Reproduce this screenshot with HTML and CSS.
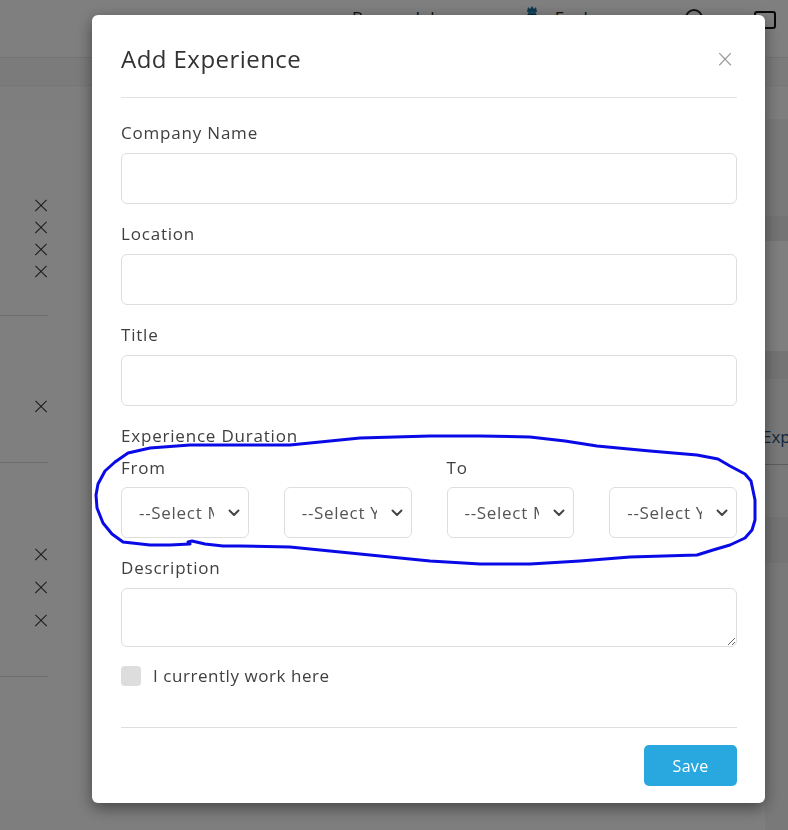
FILE: index.html
```html
<!DOCTYPE html>
<html lang="en">
<head>
<meta charset="utf-8">
<title>Add Experience</title>
<link rel="stylesheet" href="styles.css">
</head>
<body>
<div class="page">
  <header class="topnav">
    <span class="nav-link browse">Browse Jobs</span>
    <span class="nav-avatar">
      <svg width="14" height="18" viewBox="0 0 14 18"><path d="M2 6 L3 1 L5 3 L7 0 L9 3 L11 1 L12 6 Z" fill="#1f6f9c"/><circle cx="7" cy="9" r="4.5" fill="#2b86b8"/><rect x="3" y="8" width="8" height="2" fill="#1b4f6e"/><path d="M1 18 Q7 12 13 18 Z" fill="#2b86b8"/></svg>
    </span>
    <span class="nav-link explore">Explore</span>
    <span class="nav-search">
      <svg width="22" height="22" viewBox="0 0 22 22"><circle cx="10" cy="10" r="8" fill="none" stroke="#222" stroke-width="2"/><path d="M16 16 L21 21" stroke="#222" stroke-width="2"/></svg>
    </span>
    <span class="nav-msg">
      <svg width="22" height="20" viewBox="0 0 22 20"><rect x="1" y="1" width="20" height="16" rx="2" fill="none" stroke="#111" stroke-width="2"/></svg>
    </span>
  </header>
  <div class="subbar"></div>
  <main class="main">
    <aside class="left-card">
      <section class="lc-sec lc-sec1">
        <span class="x-icon"></span>
        <span class="x-icon"></span>
        <span class="x-icon"></span>
        <span class="x-icon"></span>
      </section>
      <section class="lc-sec lc-sec2">
        <span class="x-icon"></span>
      </section>
      <section class="lc-sec lc-sec3">
        <span class="x-icon"></span>
        <span class="x-icon"></span>
        <span class="x-icon"></span>
      </section>
      <section class="lc-sec lc-sec4"></section>
    </aside>
    <div class="right-col">
      <div class="rc-band rc-b1"></div>
      <div class="rc-block rc-b2"></div>
      <div class="rc-band rc-b3"></div>
      <div class="rc-link">Exp</div>
      <div class="rc-block rc-b4"></div>
      <div class="rc-band rc-b5"></div>
    </div>
  </main>
</div>

<div class="backdrop">
  <div class="modal">
    <div class="modal-header">
      <h2 class="modal-title">Add Experience</h2>
      <span class="modal-close">×</span>
    </div>
    <div class="modal-body">
      <div class="form-group">
        <label class="form-label">Company Name</label>
        <div class="form-input"></div>
      </div>
      <div class="form-group">
        <label class="form-label">Location</label>
        <div class="form-input"></div>
      </div>
      <div class="form-group">
        <label class="form-label">Title</label>
        <div class="form-input"></div>
      </div>
      <div class="form-group duration">
        <label class="form-label">Experience Duration</label>
        <div class="duration-grid">
          <span class="sub-label span2">From</span>
          <span class="sub-label span2">To</span>
          <div class="select"><span class="select-text">--Select Month--</span><svg class="chev" width="12" height="8" viewBox="0 0 12 8"><path d="M1.5 1.5 L6 6 L10.5 1.5" fill="none" stroke="#444" stroke-width="2" stroke-linecap="round" stroke-linejoin="round"/></svg></div>
          <div class="select"><span class="select-text">--Select Year--</span><svg class="chev" width="12" height="8" viewBox="0 0 12 8"><path d="M1.5 1.5 L6 6 L10.5 1.5" fill="none" stroke="#444" stroke-width="2" stroke-linecap="round" stroke-linejoin="round"/></svg></div>
          <div class="select"><span class="select-text">--Select Month--</span><svg class="chev" width="12" height="8" viewBox="0 0 12 8"><path d="M1.5 1.5 L6 6 L10.5 1.5" fill="none" stroke="#444" stroke-width="2" stroke-linecap="round" stroke-linejoin="round"/></svg></div>
          <div class="select"><span class="select-text">--Select Year--</span><svg class="chev" width="12" height="8" viewBox="0 0 12 8"><path d="M1.5 1.5 L6 6 L10.5 1.5" fill="none" stroke="#444" stroke-width="2" stroke-linecap="round" stroke-linejoin="round"/></svg></div>
        </div>
      </div>
      <div class="form-group">
        <label class="form-label">Description</label>
        <textarea class="form-textarea"></textarea>
      </div>
      <div class="check-row">
        <span class="checkbox"></span>
        <span class="check-label">I currently work here</span>
      </div>
    </div>
    <div class="modal-footer">
      <button class="btn-save">Save</button>
    </div>
  </div>
</div>

<svg class="annotation" width="788" height="830" viewBox="0 0 788 830">
  <path d="M190 445 L240 445 L290 445 L330 441 L360 438 L430 436 L480 436 L530 437 L565 441 L597 446 L650 451 L697 455 L718 459 L730 466 L745 474 L751 481 L755 500 L755 520 L752 530 L745 538 L730 545 L713 550 L697 555 L630 557 L580 561 L530 564 L480 564 L430 561 L390 557 L330 551 L290 547 L240 546 L223 546 L205 544 L192 541 L188 542 L190 544 L170 545 L150 545 L123 542 L112 534 L103 523 L97 508 L96 495 L98 484 L105 471 L115 462 L128 453 L150 448 Z" fill="none" stroke="#0a0ae6" stroke-width="3" stroke-linejoin="round" stroke-linecap="round"/>
</svg>
</body>
</html>
```

FILE: styles.css
```css
* { box-sizing: border-box; }

html, body {
  margin: 0;
  padding: 0;
}

body {
  width: 788px;
  height: 830px;
  overflow: hidden;
  font-family: "Open Sans", "Liberation Sans", sans-serif;
  position: relative;
}

/* ---------- background page ---------- */
.page {
  width: 788px;
  height: 830px;
  background: #f4f4f4;
  display: flex;
  flex-direction: column;
}

.topnav {
  height: 58px;
  flex: none;
  background: #ffffff;
  border-bottom: 1px solid #e8e8e8;
  display: flex;
  align-items: flex-start;
  padding-top: 6px;
  font-size: 17px;
  color: #222;
}

.nav-link { line-height: 24px; }
.browse { margin-left: 352px; }
.nav-avatar { margin-left: 76px; }
.explore { margin-left: 16px; }
.nav-search { margin-left: 70px; margin-top: 2px; }
.nav-msg { margin-left: 48px; margin-top: 5px; }

.subbar {
  height: 28px;
  flex: none;
  background: #f7f7f7;
  border-bottom: 1px solid #ededed;
}

.main {
  flex: 1;
  display: flex;
  justify-content: space-between;
  padding-top: 33px;
  background: #fcfcfc;
}

.left-card {
  width: 71px;
  height: 682px;
  background: #ffffff;
  border-radius: 0 6px 6px 0;
  display: flex;
  flex-direction: column;
}

.lc-sec {
  display: flex;
  flex-direction: column;
  align-items: flex-start;
  padding-left: 35px;
  margin-right: 23px;
  border-bottom: 1px solid #d8d8d8;
}

.lc-sec1 { height: 197px; padding-top: 80px; gap: 10px; }
.lc-sec2 { height: 147px; padding-top: 84px; }
.lc-sec3 { height: 214px; padding-top: 85px; gap: 21px; }
.lc-sec4 { flex: 1; border-bottom: none; }

.x-icon {
  width: 12px;
  height: 12px;
  position: relative;
}
.x-icon::before,
.x-icon::after {
  content: "";
  position: absolute;
  left: -2px;
  top: 5.5px;
  width: 16px;
  height: 1.3px;
  background: #333;
  transform: rotate(45deg);
}
.x-icon::after { transform: rotate(-45deg); }

.right-col {
  width: 23px;
  display: flex;
  flex-direction: column;
  background: #f3f3f3;
  overflow: hidden;
}
.rc-band { background: #e9e9e9; }
.rc-b1 { height: 25px; margin-top: 97px; }
.rc-b2 { height: 110px; background: #ffffff; }
.rc-b3 { height: 28px; }
.rc-link {
  margin-top: 48px;
  font-size: 17px;
  line-height: 20px;
  color: #1e4f7a;
  white-space: nowrap;
  margin-left: -3px;
}
.rc-b4 { height: 18px; border-bottom: 1px solid #bbbbbb; }
.rc-b5 { height: 46px; margin-top: 52px; }

/* ---------- backdrop & modal ---------- */
.backdrop {
  position: fixed;
  inset: 0;
  background: rgba(0, 0, 0, 0.5);
}

.modal {
  margin: 15px 0 0 92px;
  width: 673px;
  height: 788px;
  background: #ffffff;
  border-radius: 6px;
  box-shadow: 0 5px 16px rgba(0, 0, 0, 0.45);
  display: flex;
  flex-direction: column;
  color: #3f3f3f;
}

.modal-header {
  margin: 0 28px 0 29px;
  padding: 29px 0 23px;
  border-bottom: 1px solid #e3e3e3;
  display: flex;
  align-items: center;
  justify-content: space-between;
}

.modal-title {
  margin: 0;
  font-size: 24px;
  font-weight: 400;
  line-height: 30px;
  letter-spacing: 0.45px;
  color: #333;
}

.modal-close {
  font-size: 24px;
  line-height: 24px;
  color: #9a9a9a;
  margin-right: 2px;
  font-family: "DejaVu Sans", sans-serif;
  font-weight: 300;
}

.modal-body {
  margin: 0 28px 0 29px;
  padding-top: 25px;
  flex: 1;
}

.form-group {
  display: flex;
  flex-direction: column;
  margin-bottom: 20px;
}

.form-label,
.sub-label,
.check-label {
  font-size: 17px;
  line-height: 20px;
  letter-spacing: 0.8px;
  color: #3f3f3f;
}

.check-label { letter-spacing: 0.55px; }

.form-label { margin-bottom: 10px; }

.form-input {
  height: 51px;
  border: 1px solid #dedede;
  border-radius: 6px;
}

.duration .form-label { margin-bottom: 12px; }

.duration-grid {
  display: grid;
  grid-template-columns: repeat(4, minmax(0, 1fr));
  column-gap: 35px;
  row-gap: 9px;
}

.span2 { grid-column: span 2; }

.select {
  min-width: 0;
  height: 51px;
  border: 1px solid #dedede;
  border-radius: 6px;
  display: flex;
  align-items: center;
  padding: 0 7px 0 17px;
}

.select-text {
  flex: 1;
  min-width: 0;
  overflow: hidden;
  white-space: nowrap;
  font-size: 17px;
  letter-spacing: 0.7px;
  color: #555;
  margin-right: 14px;
}

.chev { flex: none; margin-right: 1px; }

.form-textarea {
  display: block;
  height: 59px;
  width: 100%;
  border: 1px solid #dedede;
  border-radius: 6px;
  resize: vertical;
  font: inherit;
  outline: none;
}

.check-row {
  display: flex;
  align-items: center;
  margin-top: -1px;
}

.checkbox {
  width: 20px;
  height: 20px;
  border-radius: 4px;
  background: #dddddd;
  margin-right: 12px;
}

.modal-footer {
  margin: 0 28px 0 29px;
  padding: 17px 0 17px;
  border-top: 1px solid #dedede;
  display: flex;
  justify-content: flex-end;
}

.btn-save {
  width: 93px;
  height: 41px;
  border: none;
  border-radius: 5px;
  background: #29a8e0;
  color: #ffffff;
  font-family: inherit;
  font-size: 16px;
  letter-spacing: 0.3px;
}

.annotation {
  position: absolute;
  top: 0;
  left: 0;
  pointer-events: none;
}
```
